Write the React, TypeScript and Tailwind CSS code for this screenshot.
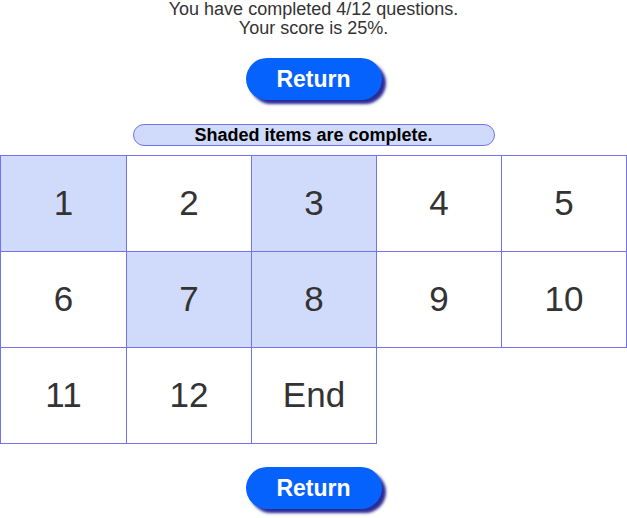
const done = [1, 3, 7, 8];
const items = ['1', '2', '3', '4', '5', '6', '7', '8', '9', '10', '11', '12', 'End'];

function ReturnButton() {
  return (
    <button className="w-[136px] h-[42px] rounded-full bg-[#0662fd] text-white text-[23px] font-bold leading-none shadow-[4px_4px_3px_#2b2b96]">
      Return
    </button>
  );
}

export default function App() {
  return (
    <div className="w-[627px] h-[518px] bg-white overflow-hidden flex flex-col items-center font-['Liberation_Sans',Arial,sans-serif]">
      <div className="text-center text-[18px] leading-[19px] text-[#333]">
        <p>You have completed 4/12 questions.</p>
        <p>Your score is 25%.</p>
      </div>
      <div className="mt-[20px]">
        <ReturnButton />
      </div>
      <div className="mt-[24px] w-[362px] h-[22px] rounded-[11px] border border-[#7272f2] bg-[#d0dafa] text-center text-[18px] font-bold leading-[20px] text-black">
        Shaded items are complete.
      </div>
      <div className="mt-[9px] self-start grid grid-cols-[127px_125px_125px_125px_125px]">
        {items.map((label, i) => {
          const shaded = done.includes(i + 1);
          const firstCol = i % 5 === 0;
          const firstRow = i < 5;
          return (
            <div
              key={label}
              className={
                'flex items-center justify-center pb-[3px] border-r border-b border-[#7272f2] text-[35px] leading-none text-[#333] ' +
                (shaded ? 'bg-[#d0dafa] ' : 'bg-white ') +
                (firstCol ? 'border-l ' : '') +
                (firstRow ? 'border-t h-[97px]' : 'h-[96px]')
              }
            >
              {label}
            </div>
          );
        })}
      </div>
      <div className="mt-[23px]">
        <ReturnButton />
      </div>
    </div>
  );
}
